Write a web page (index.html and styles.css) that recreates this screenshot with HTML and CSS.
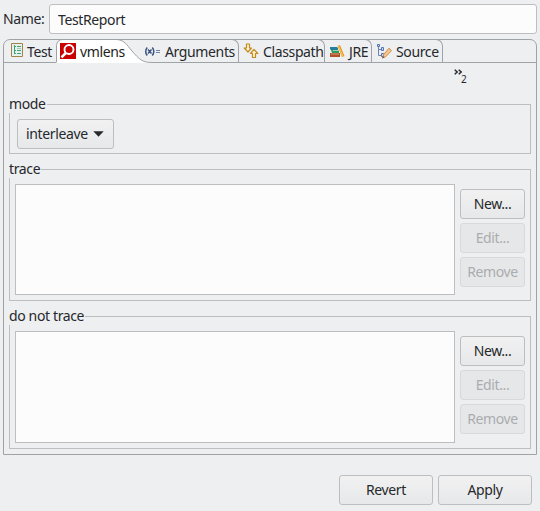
FILE: index.html
```html
<!DOCTYPE html>
<html lang="en">
<head>
<meta charset="utf-8">
<title>Run Configuration</title>
<link rel="stylesheet" href="styles.css">
</head>
<body>
<div class="name-row">
  <label class="name-label" for="name">Name:</label>
  <input class="name-input" id="name" type="text" value="TestReport">
</div>

<main class="folder">
  <nav class="tabs">
    <div class="tab tab-test">
      <svg class="icon" width="16" height="16" viewBox="0 0 16 16">
        <path d="M3.500 .5h11v13h-11z" fill="#e7f0f1" stroke="#a28448"/>
        <path d="M6.500 2v9M6 3.500h2M6 7.500h2M6 10.500h2M9 3.500h4M9 7.500h4M9 10.500h4" stroke="#3fa46b" fill="none"/>
        <path d="M9 5.500h4" stroke="#9bceb3"/>
      </svg>
      <span>Test</span>
    </div>
    <div class="tab tab-active">
      <svg class="active-shape" width="100" height="24" viewBox="0 0 100 24">
        <path d="M.5 24V6.500Q1 .5 7 .5H60C68 .5 71 6 76 12C83 20 86 23.500 96 23.500V24Z" fill="#fff"/>
        <path d="M.5 23V6.500Q1 .5 7 .5H60C68 .5 71 6 76 12C83 20 86 23.500 96 23.500" fill="none" stroke="#a0a3a6"/>
        <path d="M60 .5H100" stroke="#a0a3a6"/>
      </svg>
      <svg class="icon" width="16" height="16" viewBox="0 0 16 16">
        <path d="M0 0h16v16H0z" fill="#c80000"/>
        <circle cx="9" cy="6.500" r="4.500" fill="none" stroke="#fff" stroke-width="1.900"/>
        <path d="M5.800 10L1.500 14.300" stroke="#fff" stroke-width="2.500"/>
      </svg>
      <span>vmlens</span>
    </div>
    <div class="tab tab-arguments">
      <svg class="icon" width="17" height="16" viewBox="0 0 17 16">
        <path d="M3.200 4.500Q.2 8.500 3.200 12.500M8.300 4.500Q11.300 8.500 8.300 12.500M4 6.500L7.500 10.500M7.500 6.500L4 10.500" fill="none" stroke="#3c5480" stroke-width="1.500"/>
        <path d="M12 7.500h4M12 9.500h4" stroke="#7182a3"/>
      </svg>
      <span>Arguments</span>
    </div>
    <div class="tab tab-classpath">
      <svg class="icon" width="16" height="16" viewBox="0 0 16 16">
        <path d="M3.500 1h3v4h2L5 9L1.200 5h2.300z" fill="#fff3cf" stroke="#c38a22" stroke-width="1.200" stroke-linejoin="round"/>
        <path d="M9.500 14.500h3v-4h2.300L11 6.500L7.500 10.500h2z" fill="#fff3cf" stroke="#c38a22" stroke-width="1.200" stroke-linejoin="round"/>
      </svg>
      <span>Classpath</span>
    </div>
    <div class="tab tab-jre">
      <svg class="icon" width="16" height="16" viewBox="0 0 16 16">
        <path d="M1 4h7l1 1v2H2L1 6z" fill="#277e9c"/>
        <path d="M2 7h8v3H3z" fill="#2e9b63"/>
        <path d="M4 7.500h6" stroke="#9ad2ac"/>
        <path d="M1 10h10v4H1z" fill="#ad522b"/>
        <path d="M2 11h8" stroke="#df9c73"/>
        <path d="M8.500 3L11 2L15.500 13L13 14z" fill="#e79a22"/>
        <path d="M9.500 3L14 13.500" stroke="#f9cf67"/>
      </svg>
      <span>JRE</span>
    </div>
    <div class="tab tab-source">
      <svg class="icon" width="16" height="16" viewBox="0 0 16 16">
        <path d="M2.500 4v8.500H6M2.500 6.500H6" fill="none" stroke="#6a84b5"/>
        <path d="M1.500 1.500h2v2h-2zM5.500 4.500h2v3h-2zM5.500 10.500h2v3h-2z" fill="#c8d8f2" stroke="#5675b0"/>
        <path d="M6.800 14.800L7.800 11.300L13 5.200L15.500 7.600L10 13.500z" fill="#f5c58c" stroke="#cf8d4b" stroke-linejoin="round"/>
        <path d="M6 15.500l1-2.500l1.500 1.500z" fill="#6b5347"/>
      </svg>
      <span>Source</span>
    </div>
  </nav>

  <div class="chevron-row">
    <svg width="9" height="7" viewBox="0 0 9 7"><path d="M.7 .8L3.200 3L.7 5.200M4.700 .8L7.200 3L4.700 5.200" fill="none" stroke="#26282a" stroke-width="1.500"/></svg>
    <span class="hidden-count">2</span>
  </div>

  <section class="group group-mode">
    <h2 class="legend">mode</h2>
    <button class="button combo" type="button">interleave
      <svg width="11" height="6" viewBox="0 0 11 6"><path d="M.3 .3h10.400L5.500 5.800z" fill="#26282a"/></svg>
    </button>
  </section>

  <section class="group group-trace">
    <h2 class="legend">trace</h2>
    <div class="group-body">
      <div class="list"></div>
      <div class="actions">
        <button class="button" type="button">New...</button>
        <button class="button" type="button" disabled>Edit...</button>
        <button class="button" type="button" disabled>Remove</button>
      </div>
    </div>
  </section>

  <section class="group group-exclude">
    <h2 class="legend">do not trace</h2>
    <div class="group-body">
      <div class="list"></div>
      <div class="actions">
        <button class="button" type="button">New...</button>
        <button class="button" type="button" disabled>Edit...</button>
        <button class="button" type="button" disabled>Remove</button>
      </div>
    </div>
  </section>
</main>

<footer class="footer">
  <button class="button" type="button">Revert</button>
  <button class="button" type="button">Apply</button>
</footer>
</body>
</html>
```
FILE: styles.css
```css
* {
  box-sizing: border-box;
}

body {
  margin: 0;
  width: 540px;
  height: 511px;
  padding: 4px 3px 0;
  overflow: hidden;
  background: #eeeff1;
  color: #26282b;
  font: 14px/18px "Noto Sans", sans-serif;
  letter-spacing: -0.37px;
}

.name-row {
  display: flex;
  align-items: center;
  height: 30px;
}

.name-label {
  width: 46px;
}

.name-input {
  flex: 1;
  height: 30px;
  padding: 0 8px;
  border: 1px solid #bcbec0;
  border-radius: 3px;
  background: #fcfcfc;
  color: inherit;
  font: inherit;
  letter-spacing: inherit;
}

.folder {
  width: 534px;
  height: 416px;
  margin-top: 5px;
  padding: 0 5px;
  border: 1px solid #a0a3a6;
  border-radius: 7px 7px 0 0;
}

.tabs {
  display: flex;
  height: 24px;
  margin: -1px -5px 0;
  border-bottom: 1px solid #a0a3a6;
}

.tab {
  position: relative;
  display: flex;
  flex: none;
  align-items: center;
  height: 24px;
  border-top: 1px solid transparent;
  white-space: nowrap;
}

.icon {
  position: relative;
  flex: none;
  margin-top: -1px;
}

.tab span {
  position: relative;
}

.tab-test {
  width: 52px;
  padding-left: 4px;
  gap: 3px;
}

.tab-active {
  width: 85px;
  padding-left: 4px;
  gap: 4px;
  color: #1d1e20;
}

.active-shape {
  position: absolute;
  left: 0;
  top: -1px;
}

.tab-arguments,
.tab-classpath,
.tab-jre,
.tab-source {
  border-top-color: #a0a3a6;
  border-right: 1px solid #a0a3a6;
  border-top-right-radius: 7px;
}

.tab-arguments {
  width: 98px;
  padding-left: 3px;
  gap: 4px;
}

.tab-classpath {
  width: 86px;
  padding-left: 4px;
  gap: 4px;
}

.tab-jre {
  width: 47px;
  padding-left: 4px;
  gap: 4px;
}

.tab-source {
  width: 71px;
  padding-left: 4px;
  gap: 4px;
}

.chevron-row {
  display: flex;
  height: 41px;
  padding: 6px 0 0 445px;
}

.hidden-count {
  margin: 5px 0 0 -2px;
  font-size: 10px;
  line-height: 10px;
}

.group {
  width: 522px;
  border: 1px solid #bcbec0;
}

.legend {
  width: max-content;
  height: 18px;
  margin: -10px 0 0 -1px;
  padding-right: 1px;
  background: #eeeff1;
  font-size: inherit;
  font-weight: normal;
}

.group-mode {
  height: 50px;
}

.group-trace {
  height: 132px;
  margin-top: 15px;
}

.group-exclude {
  height: 133px;
  margin-top: 15px;
}

.group-body {
  display: flex;
  gap: 5px;
  padding: 6px 5px 0;
}

.list {
  width: 440px;
  height: 111px;
  border: 1px solid #bcbec0;
  background: #fcfcfc;
}

.group-exclude .list {
  height: 112px;
}

.actions {
  display: flex;
  flex-direction: column;
  gap: 4px;
  width: 65px;
  padding-top: 5px;
}

.button {
  height: 30px;
  padding: 0;
  border: 1px solid #bcbec0;
  border-radius: 3px;
  background: linear-gradient(#f1f1f2, #e7e8e9);
  color: inherit;
  font: inherit;
  letter-spacing: inherit;
}

.button:disabled {
  border-color: #d7d9db;
  background: #e6e7e9;
  color: #aaacae;
}

.combo {
  display: flex;
  align-items: center;
  justify-content: space-between;
  width: 97px;
  margin: 6px 0 0 7px;
  padding: 0 9px 0 8px;
}

.footer {
  display: flex;
  justify-content: flex-end;
  gap: 5px;
  margin: 20px 5px 0 0;
}

.footer .button {
  width: 94px;
}
```
